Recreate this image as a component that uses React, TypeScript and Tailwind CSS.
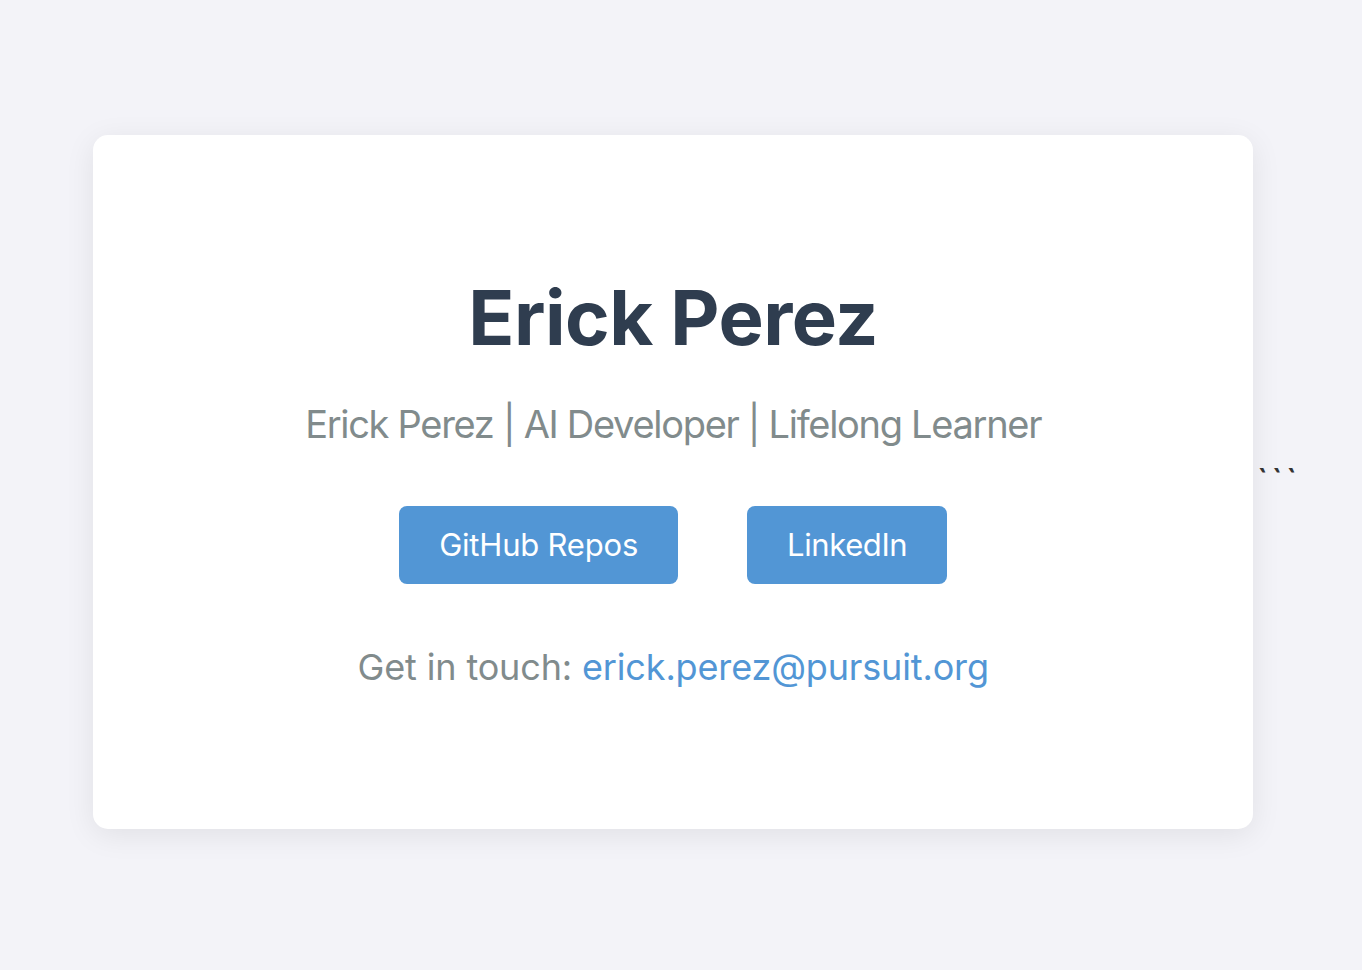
import React from 'react';

const font = { fontFamily: 'Inter, "Noto Sans", sans-serif' };

export default function App() {
    return (
        <div
            className="min-h-screen w-full bg-[#f3f3f8] flex items-center justify-center pl-[32px] pb-[6px]"
            style={font}
        >
            <div className="w-[1160px] h-[694px] shrink-0 bg-white rounded-[15px] shadow-[0_6px_30px_rgba(0,0,0,0.08)] flex flex-col items-center pt-[144px]">
                <h1 className="text-[76px] leading-none font-bold text-[#2f3d4f] tracking-[-0.5px]">Erick Perez</h1>
                <p className="mt-[50px] text-[38px] leading-none text-[#818b8c] tracking-[-1.3px]">
                    Erick Perez | AI Developer | Lifelong Learner
                </p>
                <div className="mt-[63px] flex gap-[69px]">
                    <a href="#" className="h-[78px] px-[40px] flex items-center bg-[#5296d5] rounded-[8px] text-white text-[31px] tracking-[-0.2px]">
                        GitHub Repos
                    </a>
                    <a href="#" className="h-[78px] px-[40px] flex items-center bg-[#5296d5] rounded-[8px] text-white text-[31px] tracking-[-0.4px]">
                        LinkedIn
                    </a>
                </div>
                <p className="mt-[65px] text-[36px] leading-none text-[#818b8c] tracking-[-0.15px]">
                    Get in touch: <a href="#" className="text-[#5296d5]">erick.perez@pursuit.org</a>
                </p>
            </div>
            <span className="ml-[4px] mb-[4px] text-[30px] text-[#333] leading-none font-semibold tracking-[4px]">```</span>
        </div>
    );
}
